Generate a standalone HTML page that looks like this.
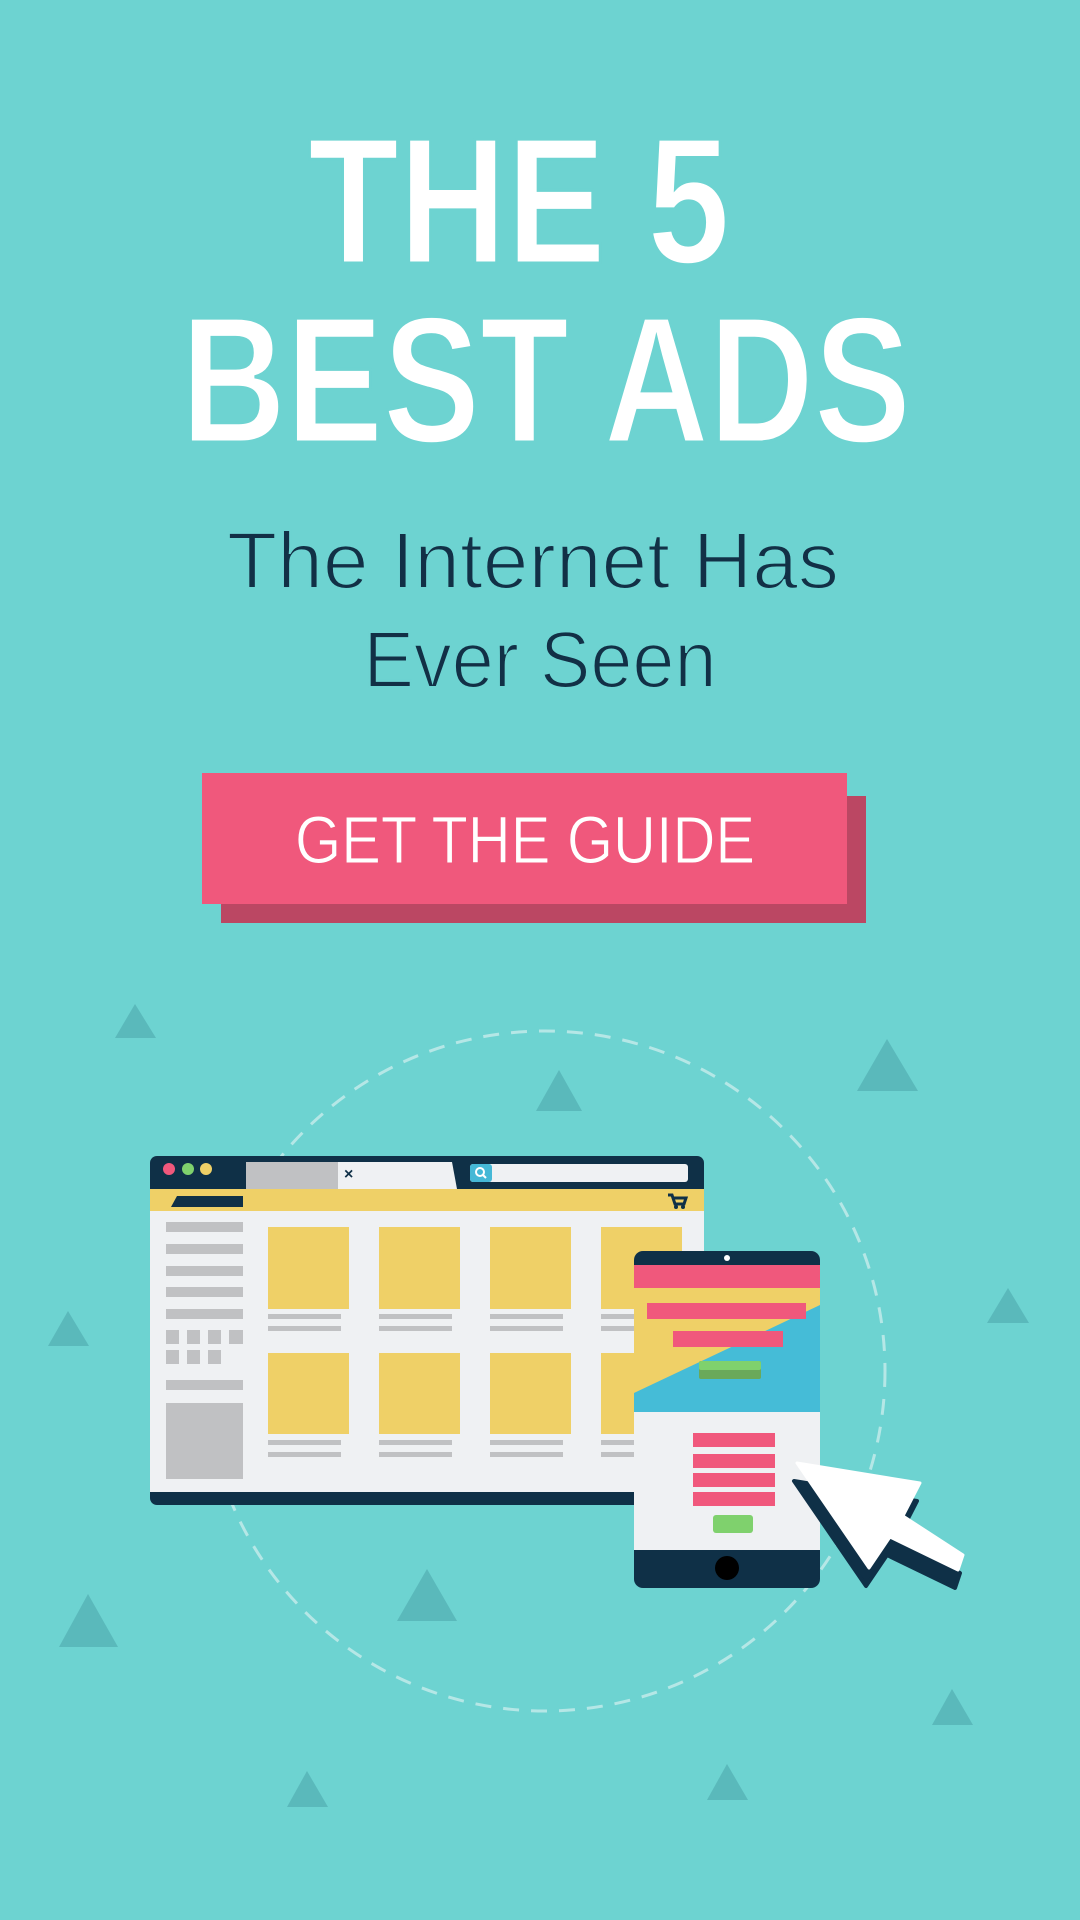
<!DOCTYPE html>
<html><head><meta charset="utf-8"><style>
html,body{margin:0;padding:0;background:#6dd3d1;}
svg{display:block;}
</style></head><body>
<svg width="1080" height="1920" viewBox="0 0 1080 1920" xmlns="http://www.w3.org/2000/svg">
<rect width="1080" height="1920" fill="#6dd3d1"/>
<text x="519" y="263" font-family="Liberation Sans, sans-serif" font-weight="bold" font-size="180" fill="#fff" stroke="#6dd3d1" stroke-width="3" text-anchor="middle" textLength="422" lengthAdjust="spacingAndGlyphs">THE 5</text>
<text x="546" y="442" font-family="Liberation Sans, sans-serif" font-weight="bold" font-size="180" fill="#fff" stroke="#6dd3d1" stroke-width="3" text-anchor="middle" textLength="730" lengthAdjust="spacingAndGlyphs">BEST ADS</text>
<text x="533" y="588" font-family="Liberation Sans, sans-serif" font-size="80" fill="#123046" stroke="#6dd3d1" stroke-width="2" text-anchor="middle" textLength="612" lengthAdjust="spacingAndGlyphs">The Internet Has</text>
<text x="540" y="687" font-family="Liberation Sans, sans-serif" font-size="80" fill="#123046" stroke="#6dd3d1" stroke-width="2" text-anchor="middle" textLength="353" lengthAdjust="spacingAndGlyphs">Ever Seen</text>
<rect x="221" y="796" width="645" height="127" fill="#bb4763"/>
<rect x="202" y="773" width="645" height="131" fill="#f0587c"/>
<text x="525" y="863" font-family="Liberation Sans, sans-serif" font-size="67" fill="#fff" stroke="#f0587c" stroke-width="1" text-anchor="middle" textLength="460" lengthAdjust="spacingAndGlyphs">GET THE GUIDE</text>
<g fill="#5ab9bb">
<polygon points="135,1004 115,1038 156,1038"/>
<polygon points="559,1070 536,1111 582,1111"/>
<polygon points="887,1039 857,1091 918,1091"/>
<polygon points="68,1311 48,1346 89,1346"/>
<polygon points="1008,1288 987,1323 1029,1323"/>
<polygon points="88,1594 59,1647 118,1647"/>
<polygon points="427,1569 397,1621 457,1621"/>
<polygon points="952,1689 932,1725 973,1725"/>
<polygon points="307,1771 287,1807 328,1807"/>
<polygon points="727,1764 707,1800 748,1800"/>
</g>
<circle cx="545" cy="1371" r="340" fill="none" stroke="#b5e7e6" stroke-width="3" stroke-dasharray="16 12"/>
<!-- browser -->
<rect x="150" y="1156" width="554" height="349" rx="7" fill="#0f3047"/>
<rect x="150" y="1189" width="554" height="303" fill="#eff1f3"/>
<rect x="150" y="1189" width="554" height="22" fill="#efd067"/>
<circle cx="169" cy="1169" r="6" fill="#f0587c"/>
<circle cx="188" cy="1169" r="6" fill="#7fd16d"/>
<circle cx="206" cy="1169" r="6" fill="#efd067"/>
<rect x="246" y="1162" width="92" height="27" fill="#c0c1c3"/>
<polygon points="338,1162 452,1162 457,1189 338,1189" fill="#eff1f3"/>
<text x="344" y="1179" font-family="Liberation Sans, sans-serif" font-weight="bold" font-size="16" fill="#0f3047">×</text>
<rect x="470" y="1164" width="218" height="18" rx="3" fill="#eff1f3"/>
<rect x="470" y="1164" width="22" height="18" rx="3" fill="#45b8d6"/>
<circle cx="480" cy="1172" r="4" fill="none" stroke="#fff" stroke-width="2"/>
<line x1="483" y1="1175" x2="486" y2="1178" stroke="#fff" stroke-width="2"/>
<polygon points="177,1196 243,1196 243,1207 171,1207" fill="#0f3047"/>
<path d="M668 1195 l4 0 l3 9 l9 0 l2 -6 l-13 0" fill="none" stroke="#0f3047" stroke-width="3"/>
<circle cx="676" cy="1207" r="2" fill="#0f3047"/><circle cx="683" cy="1207" r="2" fill="#0f3047"/>
<g fill="#c0c1c3">
<rect x="166" y="1222" width="77" height="10"/>
<rect x="166" y="1244" width="77" height="10"/>
<rect x="166" y="1266" width="77" height="10"/>
<rect x="166" y="1287" width="77" height="10"/>
<rect x="166" y="1309" width="77" height="10"/>
<rect x="166" y="1330" width="13" height="14"/><rect x="187" y="1330" width="13" height="14"/><rect x="208" y="1330" width="13" height="14"/><rect x="229" y="1330" width="14" height="14"/>
<rect x="166" y="1350" width="13" height="14"/><rect x="187" y="1350" width="13" height="14"/><rect x="208" y="1350" width="13" height="14"/>
<rect x="166" y="1380" width="77" height="10"/>
<rect x="166" y="1403" width="77" height="76"/>
</g>
<g fill="#efd067">
<rect x="268" y="1227" width="81" height="82"/><rect x="379" y="1227" width="81" height="82"/><rect x="490" y="1227" width="81" height="82"/><rect x="601" y="1227" width="81" height="82"/>
<rect x="268" y="1353" width="81" height="81"/><rect x="379" y="1353" width="81" height="81"/><rect x="490" y="1353" width="81" height="81"/><rect x="601" y="1353" width="81" height="81"/>
</g>
<g fill="#c0c1c3">
<rect x="268" y="1314" width="73" height="5"/><rect x="379" y="1314" width="73" height="5"/><rect x="490" y="1314" width="73" height="5"/><rect x="601" y="1314" width="73" height="5"/>
<rect x="268" y="1326" width="73" height="5"/><rect x="379" y="1326" width="73" height="5"/><rect x="490" y="1326" width="73" height="5"/><rect x="601" y="1326" width="73" height="5"/>
<rect x="268" y="1440" width="73" height="5"/><rect x="379" y="1440" width="73" height="5"/><rect x="490" y="1440" width="73" height="5"/><rect x="601" y="1440" width="73" height="5"/>
<rect x="268" y="1452" width="73" height="5"/><rect x="379" y="1452" width="73" height="5"/><rect x="490" y="1452" width="73" height="5"/><rect x="601" y="1452" width="73" height="5"/>
</g>
<!-- phone -->
<rect x="634" y="1251" width="186" height="337" rx="9" fill="#0f3047"/>
<rect x="634" y="1265" width="186" height="285" fill="#eff1f3"/>
<rect x="634" y="1265" width="186" height="147" fill="#efd067"/>
<polygon points="820,1305 820,1412 634,1412 634,1393" fill="#45bcd7"/>
<rect x="634" y="1265" width="186" height="23" fill="#f0587c"/>
<circle cx="727" cy="1258" r="3" fill="#fff"/>
<rect x="647" y="1303" width="159" height="16" fill="#f0587c"/>
<rect x="673" y="1331" width="110" height="16" fill="#f0587c"/>
<rect x="699" y="1361" width="62" height="18" rx="2" fill="#6aa95a"/>
<rect x="699" y="1361" width="62" height="9" rx="2" fill="#7fd16d"/>
<rect x="693" y="1433" width="82" height="14" fill="#f0587c"/>
<rect x="693" y="1454" width="82" height="14" fill="#f0587c"/>
<rect x="693" y="1473" width="82" height="14" fill="#f0587c"/>
<rect x="693" y="1492" width="82" height="14" fill="#f0587c"/>
<rect x="713" y="1515" width="40" height="18" rx="3" fill="#7fd16d"/>
<ellipse cx="727" cy="1568" rx="12" ry="12" fill="#000"/>
<!-- cursor -->
<g transform="translate(-3,18)">
<polygon points="797,1463 920,1483 903,1516 963,1555 958,1570 890,1537 869,1568" fill="#0f3047" stroke="#0f3047" stroke-width="4" stroke-linejoin="round"/>
</g>
<polygon points="797,1463 920,1483 903,1516 963,1555 958,1570 890,1537 869,1568" fill="#fff" stroke="#fff" stroke-width="3" stroke-linejoin="round"/>
</svg>
</body></html>
